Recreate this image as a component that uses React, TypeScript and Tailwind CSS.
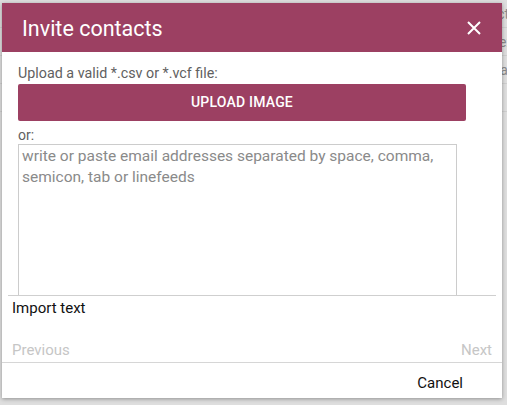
import React from 'react';

const BRAND = '#9c4062';

function BackgroundRows() {
  // page behind the modal, only its right edge peeks out
  const rows = ['Select contacts to invite', 'Contact list', 'Pending invitations', 'Settings'];
  return (
    <div className="absolute inset-0 bg-[#dedede]">
      {rows.map((r, i) => (
        <div key={i} className="h-[28px] border-b border-[#cfcfcf] pl-[420px] text-[14px] leading-[28px] text-[#8a8a8a] whitespace-nowrap overflow-hidden">
          {r} text
        </div>
      ))}
    </div>
  );
}

export default function App() {
  return (
    <div className="relative w-[507px] h-[405px] overflow-hidden font-['Roboto',_'Liberation_Sans',_sans-serif]">
      <BackgroundRows />

      <div className="absolute left-[2px] top-[3px] w-[500px] h-[395px] bg-white shadow-[0_1px_4px_rgba(0,0,0,0.35)] flex flex-col">
        <header className="h-[49px] shrink-0 flex items-center justify-between pl-[20px] pr-[20px]" style={{ backgroundColor: BRAND }}>
          <h1 className="text-[21.5px] text-white leading-none pt-[3px]">Invite contacts</h1>
          <button className="w-[16px] h-[16px] flex items-center justify-center text-white" aria-label="Close">
            <svg width="14" height="14" viewBox="0 0 14 14" fill="none" stroke="currentColor" strokeWidth="2">
              <path d="M1 1 L13 13 M13 1 L1 13" />
            </svg>
          </button>
        </header>

        <div className="mx-[6px] border-b border-[#cfcfcf] pl-[10px] pr-[30px] pt-[13px]">
          <p className="text-[14.3px] leading-[17px] text-[#616161]">Upload a valid *.csv or *.vcf file:</p>
          <button className="mt-[2px] w-[448px] h-[37px] rounded-[2px] text-white text-[14px] font-medium tracking-[0.2px]" style={{ backgroundColor: BRAND }}>
            UPLOAD IMAGE
          </button>
          <p className="mt-[5px] text-[14px] leading-[18px] text-[#616161]">or:</p>
          <textarea
            className="block w-[439px] h-[151px] border border-b-0 border-[#cccccc] px-[3px] pt-[1px] text-[15.5px] leading-[21px] text-[#333] placeholder:text-[#8a8a8a] resize-none outline-none"
            placeholder="write or paste email addresses separated by space, comma, semicon, tab or linefeeds"
          />
        </div>

        <div className="px-[10px] pt-[3px] text-[15px] leading-[18px] text-[#111]">Import text</div>

        <div className="mt-auto flex justify-between px-[10px] pb-[3px] text-[15px] leading-[18px] text-[#c6c6c6]">
          <span>Previous</span>
          <span>Next</span>
        </div>

        <footer className="h-[36px] shrink-0 border-t border-[#d6d6d6] flex items-center justify-end pr-[39px]">
          <button className="text-[15px] text-[#111] pt-[5px]">Cancel</button>
        </footer>
      </div>
    </div>
  );
}
